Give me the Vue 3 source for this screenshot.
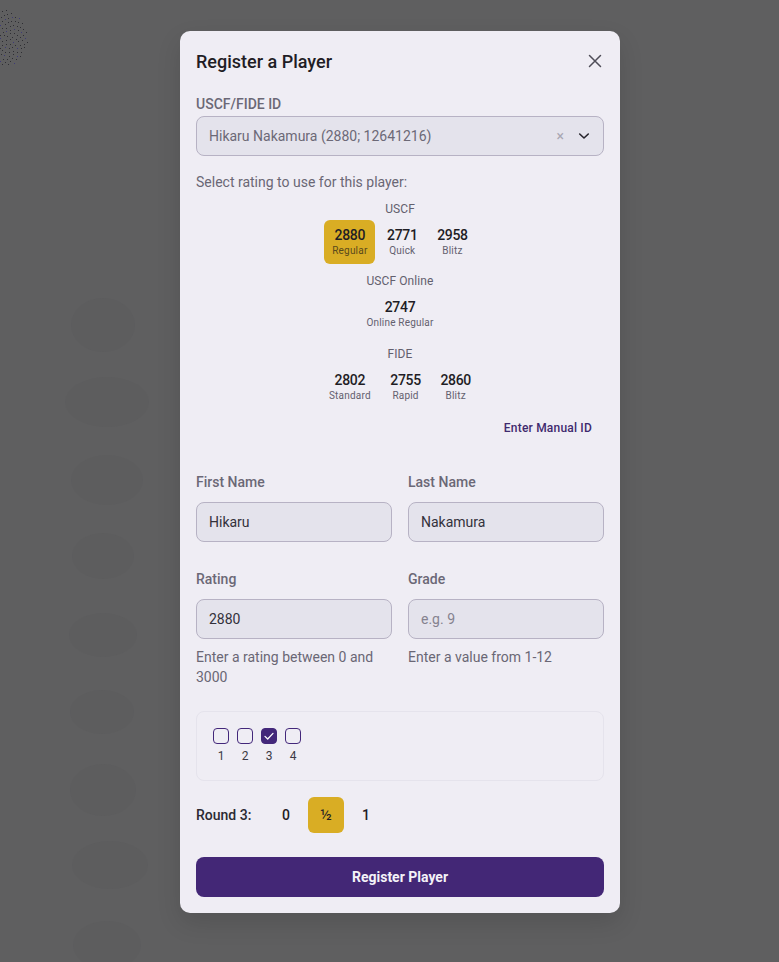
<template>
  <div class="backdrop">
    <svg class="bg-art" width="779" height="962" viewBox="0 0 779 962">
      <ellipse v-for="b in blobs" :key="b.y" :cx="b.x" :cy="b.y" :rx="b.rx" :ry="b.ry" fill="#5d5d5e" />
      <rect v-for="(d, i) in dots" :key="i" :x="d.x" :y="d.y" width="1" height="1" :fill="d.c" />
    </svg>

    <div class="modal">
      <div class="modal-header">
        <h2>Register a Player</h2>
        <button class="close-btn" aria-label="Close">
          <svg width="24" height="24" viewBox="0 0 24 24" fill="none" stroke="#4f4d58" stroke-width="1.5" stroke-linecap="round">
            <path d="M6.5 6.5l11 11M17.5 6.5l-11 11" />
          </svg>
        </button>
      </div>

      <label class="field-label">USCF/FIDE ID</label>
      <div class="select-box">
        <span class="select-value">Hikaru Nakamura (2880; 12641216)</span>
        <span class="select-clear">×</span>
        <svg width="16" height="16" viewBox="0 0 16 16" fill="none" stroke="#26242c" stroke-width="1.6" stroke-linecap="round" stroke-linejoin="round">
          <path d="M3.7 6l4.3 4 4.3-4" />
        </svg>
      </div>

      <p class="rating-hint">Select rating to use for this player:</p>

      <div class="rating-groups">
        <div v-for="group in ratingGroups" :key="group.name" class="rating-group">
          <div class="rating-group-name">{{ group.name }}</div>
          <div class="rating-row">
            <div v-for="r in group.ratings" :key="r.label" class="rating-card" :class="{ selected: r.selected }">
              <div class="rating-value">{{ r.value }}</div>
              <div class="rating-label">{{ r.label }}</div>
            </div>
          </div>
        </div>
      </div>

      <div class="manual-row">
        <button class="manual-btn">Enter Manual ID</button>
      </div>

      <div class="form-grid">
        <div>
          <label class="form-label">First Name</label>
          <input class="text-input" value="Hikaru" />
        </div>
        <div>
          <label class="form-label">Last Name</label>
          <input class="text-input" value="Nakamura" />
        </div>
        <div>
          <label class="form-label">Rating</label>
          <input class="text-input" value="2880" />
          <p class="help-text">Enter a rating between 0 and 3000</p>
        </div>
        <div>
          <label class="form-label">Grade</label>
          <input class="text-input" placeholder="e.g. 9" />
          <p class="help-text">Enter a value from 1-12</p>
        </div>
      </div>

      <div class="rounds-box">
        <div v-for="n in 4" :key="n" class="round-check">
          <span class="check" :class="{ checked: n === 3 }">
            <svg v-if="n === 3" width="16" height="16" viewBox="0 0 16 16" fill="none" stroke="#fff" stroke-width="1.3" stroke-linecap="round" stroke-linejoin="round">
              <path d="M4 8.4l2.7 2.6L12 5.4" />
            </svg>
          </span>
          <span class="round-num">{{ n }}</span>
        </div>
      </div>

      <div class="score-row">
        <span class="score-label">Round 3:</span>
        <div class="score-options">
          <span v-for="s in scores" :key="s" class="score" :class="{ selected: s === '½' }">{{ s }}</span>
        </div>
      </div>

      <button class="submit-btn">Register Player</button>
    </div>
  </div>
</template>

<script setup>
const ratingGroups = [
  {
    name: 'USCF',
    ratings: [
      { value: 2880, label: 'Regular', selected: true },
      { value: 2771, label: 'Quick' },
      { value: 2958, label: 'Blitz' }
    ]
  },
  { name: 'USCF Online', ratings: [{ value: 2747, label: 'Online Regular' }] },
  {
    name: 'FIDE',
    ratings: [
      { value: 2802, label: 'Standard' },
      { value: 2755, label: 'Rapid' },
      { value: 2860, label: 'Blitz' }
    ]
  }
]

const scores = ['0', '½', '1']

// faint shapes of the page behind the dimmed overlay
const blobs = [
  { x: 103, y: 325, rx: 32, ry: 27 },
  { x: 107, y: 402, rx: 42, ry: 25 },
  { x: 107, y: 480, rx: 36, ry: 25 },
  { x: 103, y: 556, rx: 31, ry: 23 },
  { x: 103, y: 635, rx: 34, ry: 22 },
  { x: 102, y: 712, rx: 32, ry: 22 },
  { x: 103, y: 790, rx: 33, ry: 26 },
  { x: 110, y: 865, rx: 38, ry: 24 },
  { x: 107, y: 945, rx: 34, ry: 24 }
]

// dotted globe poking out at the top left
const dots = []
for (let i = 0; i < 170; i++) {
  const a = (i * 137.5 * Math.PI) / 180
  const r = 29 * Math.sqrt(i / 170)
  const x = Math.round(r * Math.cos(a) * 0.95)
  const y = Math.round(38 + r * Math.sin(a))
  if (x >= 0) dots.push({ x, y, c: i % 6 === 0 ? '#3e3a78' : '#2e2e33' })
}
</script>

<style scoped>
.backdrop {
  position: relative;
  width: 779px;
  height: 962px;
  background: #5f5f60;
  overflow: hidden;
  font-family: Roboto, "Noto Sans", sans-serif;
  color: #1f1d25;
  padding-top: 31px;
  box-sizing: border-box;
}

.bg-art {
  position: absolute;
  top: 0;
  left: 0;
}

.modal {
  position: relative;
  width: 440px;
  height: 882px;
  margin-left: 180px;
  padding: 16px;
  box-sizing: border-box;
  background: #efedf4;
  border-radius: 10px;
  box-shadow: 0 10px 25px rgba(0, 0, 0, 0.12);
}

.modal-header {
  display: flex;
  align-items: center;
  justify-content: space-between;
  height: 28px;
  margin-bottom: 19px;
}

.modal-header h2 {
  margin: 2px 0 0;
  font-size: 18px;
  font-weight: 500;
  line-height: 28px;
}

.close-btn {
  display: flex;
  margin-right: -3px;
  padding: 0;
  border: none;
  background: none;
}

.field-label,
.form-label {
  display: block;
  font-size: 14px;
  line-height: 20px;
  font-weight: 500;
  color: #6b6876;
}

.field-label {
  margin-bottom: 2px;
}

.form-label {
  margin-bottom: 10px;
}

.select-box {
  display: flex;
  align-items: center;
  height: 40px;
  padding: 0 11px 0 12px;
  box-sizing: border-box;
  background: #e4e3ec;
  border: 1px solid #b7b2c4;
  border-radius: 8px;
}

.select-value {
  flex: 1;
  font-size: 14px;
  color: #6c6977;
}

.select-clear {
  margin-right: 12px;
  font-size: 14px;
  color: #a9a7b3;
}

.rating-hint {
  margin: 16px 0 9px;
  font-size: 14px;
  line-height: 20px;
  color: #6a6775;
}

.rating-groups {
  text-align: center;
}

.rating-group:nth-child(2) {
  margin-top: 9px;
}

.rating-group:nth-child(3) {
  margin-top: 10px;
}

.rating-group-name {
  margin-bottom: 3px;
  font-size: 12px;
  line-height: 16px;
  letter-spacing: 0.1px;
  color: #63606e;
}

.rating-row {
  display: flex;
  justify-content: center;
  gap: 3.5px;
}

.rating-card {
  height: 44px;
  padding: 5px 8px;
  box-sizing: border-box;
  border-radius: 6px;
}

.rating-card.selected {
  background: #d9ad24;
}

.rating-value {
  font-size: 14px;
  font-weight: 500;
  line-height: 20px;
  letter-spacing: -0.3px;
}

.rating-label {
  font-size: 10px;
  line-height: 12px;
  letter-spacing: 0.2px;
  color: #63606e;
}

.selected .rating-label {
  color: #5a4a1c;
}

.manual-row {
  display: flex;
  justify-content: flex-end;
  margin-top: 3px;
}

.manual-btn {
  height: 32px;
  padding: 0 12px;
  border: none;
  background: none;
  font-family: inherit;
  font-size: 12px;
  font-weight: 500;
  letter-spacing: 0.2px;
  color: #3f2a6e;
}

.form-grid {
  display: grid;
  grid-template-columns: 1fr 1fr;
  column-gap: 16px;
  row-gap: 27px;
  margin-top: 27.5px;
}

.text-input {
  display: block;
  width: 100%;
  height: 40px;
  padding: 0 12px;
  box-sizing: border-box;
  background: #e4e3ec;
  border: 1px solid #b7b2c4;
  border-radius: 8px;
  font-family: inherit;
  font-size: 14px;
  color: #33313b;
  outline: none;
}

.text-input::placeholder {
  color: #85828f;
}

.help-text {
  margin: 8px 0 0;
  font-size: 14px;
  line-height: 20px;
  color: #6a6775;
}

.rounds-box {
  display: flex;
  gap: 8px;
  height: 70px;
  margin-top: 24px;
  padding: 16px;
  box-sizing: border-box;
  border: 1px solid #e5e3ec;
  border-radius: 8px;
}

.round-check {
  display: flex;
  flex-direction: column;
  align-items: center;
}

.check {
  width: 16px;
  height: 16px;
  box-sizing: border-box;
  border: 1px solid #43277a;
  border-radius: 4px;
}

.check.checked {
  background: #43277a;
}

.check.checked svg {
  display: block;
  margin: -1px;
}

.round-num {
  margin-top: 4px;
  font-size: 12px;
  line-height: 16px;
  color: #3c3a44;
}

.score-row {
  display: flex;
  align-items: center;
  margin-top: 16px;
}

.score-label {
  width: 72px;
  font-size: 14px;
  font-weight: 500;
  color: #2b2932;
}

.score-options {
  display: flex;
  gap: 4px;
}

.score {
  display: flex;
  align-items: center;
  justify-content: center;
  width: 36px;
  height: 36px;
  border-radius: 6px;
  font-size: 14px;
  font-weight: 500;
}

.score.selected {
  background: #d9ad24;
  font-weight: 400;
  font-size: 15px;
}

.submit-btn {
  display: block;
  width: 100%;
  height: 40px;
  margin-top: 24px;
  border: none;
  border-radius: 8px;
  background: #432776;
  color: #f4f2f8;
  font-family: inherit;
  font-size: 14px;
  font-weight: 700;
}
</style>
